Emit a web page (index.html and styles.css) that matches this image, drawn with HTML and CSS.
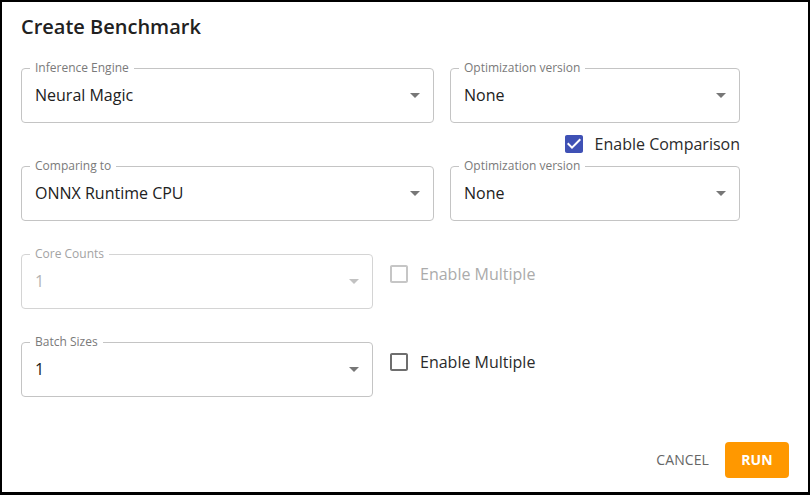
FILE: index.html
```html
<!DOCTYPE html>
<html>
<head>
<meta charset="utf-8">
<link rel="stylesheet" href="styles.css">
</head>
<body>
<div class="dialog">
  <h2 class="title">Create Benchmark</h2>
  <div class="form">
    <div class="pair">
      <fieldset class="field">
        <legend>Inference Engine</legend>
        <div class="value"><span class="text">Neural Magic</span><svg class="arrow" viewBox="0 0 24 24"><path d="M7 10l5 5 5-5z"/></svg></div>
      </fieldset>
      <fieldset class="field">
        <legend>Optimization version</legend>
        <div class="value"><span class="text">None</span><svg class="arrow" viewBox="0 0 24 24"><path d="M7 10l5 5 5-5z"/></svg></div>
      </fieldset>
    </div>
    <div class="compare">
      <label class="check">
        <svg class="box checked" viewBox="0 0 24 24"><path d="M19 3H5c-1.11 0-2 .9-2 2v14c0 1.1.89 2 2 2h14c1.1 0 2-.9 2-2V5c0-1.1-.9-2-2-2zm-9 14l-5-5 1.41-1.41L10 14.17l7.59-7.59L19 8l-7 7z"/></svg>
        <span class="check-text">Enable Comparison</span>
      </label>
    </div>
    <div class="pair">
      <fieldset class="field">
        <legend>Comparing to</legend>
        <div class="value"><span class="text">ONNX Runtime CPU</span><svg class="arrow" viewBox="0 0 24 24"><path d="M7 10l5 5 5-5z"/></svg></div>
      </fieldset>
      <fieldset class="field">
        <legend>Optimization version</legend>
        <div class="value"><span class="text">None</span><svg class="arrow" viewBox="0 0 24 24"><path d="M7 10l5 5 5-5z"/></svg></div>
      </fieldset>
    </div>
    <div class="multi">
      <fieldset class="field narrow disabled">
        <legend>Core Counts</legend>
        <div class="value"><span class="text">1</span><svg class="arrow" viewBox="0 0 24 24"><path d="M7 10l5 5 5-5z"/></svg></div>
      </fieldset>
      <label class="check side disabled">
        <svg class="box" viewBox="0 0 24 24"><path d="M19 5v14H5V5h14m0-2H5c-1.11 0-2 .9-2 2v14c0 1.1.89 2 2 2h14c1.1 0 2-.9 2-2V5c0-1.1-.9-2-2-2z"/></svg>
        <span class="check-text">Enable Multiple</span>
      </label>
    </div>
    <div class="multi">
      <fieldset class="field narrow">
        <legend>Batch Sizes</legend>
        <div class="value"><span class="text">1</span><svg class="arrow" viewBox="0 0 24 24"><path d="M7 10l5 5 5-5z"/></svg></div>
      </fieldset>
      <label class="check side">
        <svg class="box" viewBox="0 0 24 24"><path d="M19 5v14H5V5h14m0-2H5c-1.11 0-2 .9-2 2v14c0 1.1.89 2 2 2h14c1.1 0 2-.9 2-2V5c0-1.1-.9-2-2-2z"/></svg>
        <span class="check-text">Enable Multiple</span>
      </label>
    </div>
  </div>
  <div class="actions">
    <button class="btn btn-text">Cancel</button>
    <button class="btn btn-run">Run</button>
  </div>
</div>
</body>
</html>
```

FILE: styles.css
```css
* { box-sizing: border-box; }
html, body { margin: 0; padding: 0; background: #fff; }
body { font-family: "Open Sans", "Noto Sans", sans-serif; }

.dialog {
  width: 810px;
  height: 495px;
  border: 2px solid #000;
  border-bottom-width: 3px;
  background: #fff;
  padding: 11px 19px 0 19px;
}

.title {
  margin: 0;
  font-size: 20px;
  line-height: 28px;
  font-weight: 600;
  color: #212121;
}

.form {
  width: 719px;
  margin-top: 21px;
}

.pair {
  display: grid;
  grid-template-columns: 413px 290px;
  column-gap: 16px;
}

.field {
  margin: 0;
  min-width: 0;
  padding: 0 6px 7px 8px;
  border: 1px solid #c4c4c4;
  border-radius: 4px;
}
.field legend {
  padding: 0 5px;
  font-size: 12px;
  line-height: 12px;
  color: #7a7a7a;
}
.value {
  display: flex;
  align-items: center;
  height: 41px;
  padding-left: 5px;
}
.value .text {
  flex: 1;
  font-size: 16px;
  color: #212121;
}
.arrow {
  width: 24px;
  height: 24px;
  fill: #777;
}

.compare {
  display: flex;
  justify-content: flex-end;
  padding-top: 5px;
  height: 37px;
}

.check {
  display: flex;
  align-items: center;
  height: 32px;
}
.box {
  width: 24px;
  height: 24px;
  fill: #6e6e6e;
}
.box.checked { fill: #3f51b5; }
.check-text {
  margin-left: 9px;
  font-size: 16px;
  color: #2b2b2b;
}

.field.narrow { width: 352px; }
.multi {
  display: flex;
  align-items: flex-start;
  margin-top: 27px;
}
.check.side {
  height: 42px;
  margin-top: 5px;
  margin-left: 14px;
}

.field.disabled { border-color: #d4d4d4; }
.field.disabled legend { color: #a3a3a3; }
.field.disabled .value .text { color: #b3b3b3; }
.field.disabled .arrow { fill: #c2c2c2; }
.check.disabled .box { fill: #c6c6c6; }
.check.disabled .check-text { color: #ababab; }

.actions {
  display: flex;
  justify-content: flex-end;
  align-items: center;
  margin-top: 45px;
}
.btn {
  font-family: "Open Sans", "Noto Sans", sans-serif;
  font-size: 14px;
  line-height: 24px;
  height: 36px;
  min-width: 64px;
  border: 0;
  border-radius: 4px;
  text-transform: uppercase;
  letter-spacing: 0.1px;
  cursor: pointer;
}
.btn-text {
  background: transparent;
  color: #666;
  font-weight: 500;
  padding: 6px 8px;
}
.btn-run {
  margin-left: 8px;
  background: #ff9800;
  color: #fff;
  font-weight: 700;
  padding: 6px 16px;
}
```
